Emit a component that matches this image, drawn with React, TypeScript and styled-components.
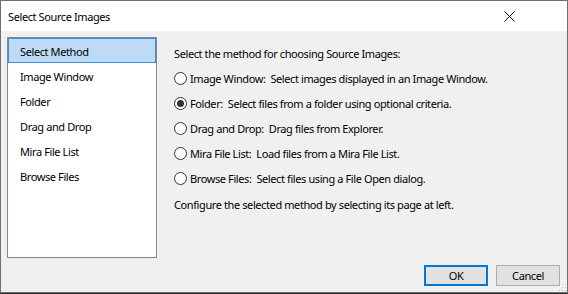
import React, { useState } from 'react'
import styled, { createGlobalStyle } from 'styled-components'

const GlobalStyle = createGlobalStyle`
  html, body {
    margin: 0;
    padding: 0;
    background: #2b2b2b;
  }
  body {
    font-family: 'Noto Sans', 'Liberation Sans', sans-serif;
    font-size: 11px;
    letter-spacing: -0.4px;
    color: #000;
  }
`

const Window = styled.div`
  width: 568px;
  height: 293px;
  box-sizing: border-box;
  border: 1px solid #6f6f6f;
  display: flex;
  flex-direction: column;
  background: #f0f0f0;
`

const TitleBar = styled.div`
  height: 30px;
  flex-shrink: 0;
  background: #fff;
  display: flex;
  align-items: center;
  justify-content: space-between;
  padding-left: 7px;
`

const Title = styled.div`
  padding-top: 1px;
`

const CloseButton = styled.div`
  width: 46px;
  height: 30px;
  display: flex;
  align-items: center;
  justify-content: center;
  margin-right: 35px;
`

const Body = styled.div`
  flex: 1;
  display: flex;
  flex-direction: column;
  padding: 6px 7px 0 6px;
  position: relative;
`

const Main = styled.div`
  display: flex;
  gap: 17px;
`

const PageList = styled.div`
  width: 150px;
  height: 221px;
  box-sizing: border-box;
  border: 1px solid #828790;
  background: #fff;
  display: flex;
  flex-direction: column;
`

const PageItem = styled.div<{ $selected?: boolean }>`
  height: 25px;
  box-sizing: border-box;
  display: flex;
  align-items: center;
  padding: 2px 0 0 11px;
  border: 1px solid ${(p) => (p.$selected ? '#3b8ed8' : 'transparent')};
  background: ${(p) => (p.$selected ? '#bddbf4' : 'transparent')};
  white-space: nowrap;
`

const Content = styled.div`
  padding-top: 4px;
  display: flex;
  flex-direction: column;
`

const Line = styled.div`
  height: 25px;
  display: flex;
  align-items: center;
  white-space: pre;
`

const Note = styled(Line)`
  margin-top: 1px;
`

const RadioRow = styled.label`
  height: 25px;
  display: flex;
  align-items: center;
  gap: 3px;
  white-space: pre;
`

const RadioCircle = styled.span<{ $checked?: boolean }>`
  width: 13px;
  height: 13px;
  box-sizing: border-box;
  border-radius: 50%;
  border: 1px solid #333;
  background: #fff;
  display: flex;
  align-items: center;
  justify-content: center;
  &::after {
    content: '';
    display: ${(p) => (p.$checked ? 'block' : 'none')};
    width: 7px;
    height: 7px;
    border-radius: 50%;
    background: #333;
  }
`

const Footer = styled.div`
  margin-top: 7px;
  display: flex;
  justify-content: flex-end;
  gap: 8px;
`

const Button = styled.button<{ $default?: boolean }>`
  width: 64px;
  height: 21px;
  box-sizing: border-box;
  background: #e1e1e1;
  border: ${(p) => (p.$default ? '2px solid #0078d7' : '1px solid #adadad')};
  font-family: inherit;
  font-size: 11px;
  letter-spacing: -0.4px;
  color: #000;
  padding: 0;
`

const Grip = styled.div`
  position: absolute;
  right: 1px;
  bottom: 1px;
  width: 8px;
  height: 8px;
  background-image: radial-gradient(circle, #bdbdbd 0.8px, transparent 1px);
  background-size: 3px 3px;
  clip-path: polygon(100% 0, 100% 100%, 0 100%);
`

const pages = ['Select Method', 'Image Window', 'Folder', 'Drag and Drop', 'Mira File List', 'Browse Files']

const methods = [
  { key: 'image', text: 'Image Window:  Select images displayed in an Image Window.' },
  { key: 'folder', text: 'Folder:  Select files from a folder using optional criteria.' },
  { key: 'drag', text: 'Drag and Drop:  Drag files from Explorer.' },
  { key: 'mira', text: 'Mira File List:  Load files from a Mira File List.' },
  { key: 'browse', text: 'Browse Files:  Select files using a File Open dialog.' },
]

const App: React.FC = () => {
  const [method, setMethod] = useState('folder')
  const [page, setPage] = useState(0)

  return (
    <>
      <GlobalStyle />
      <Window>
        <TitleBar>
          <Title>Select Source Images</Title>
          <CloseButton>
            <svg width="11" height="11" viewBox="0 0 11 11">
              <path d="M0.5 0.5 L10.5 10.5 M10.5 0.5 L0.5 10.5" stroke="#111" strokeWidth="1" />
            </svg>
          </CloseButton>
        </TitleBar>
        <Body>
          <Main>
            <PageList>
              {pages.map((name, i) => (
                <PageItem key={name} $selected={i === page} onClick={() => setPage(i)}>
                  {name}
                </PageItem>
              ))}
            </PageList>
            <Content>
              <Line>Select the method for choosing Source Images:</Line>
              {methods.map((m) => (
                <RadioRow key={m.key} onClick={() => setMethod(m.key)}>
                  <RadioCircle $checked={method === m.key} />
                  {m.text}
                </RadioRow>
              ))}
              <Note>Configure the selected method by selecting its page at left.</Note>
            </Content>
          </Main>
          <Footer>
            <Button $default>OK</Button>
            <Button>Cancel</Button>
          </Footer>
          <Grip />
        </Body>
      </Window>
    </>
  )
}

export default App
